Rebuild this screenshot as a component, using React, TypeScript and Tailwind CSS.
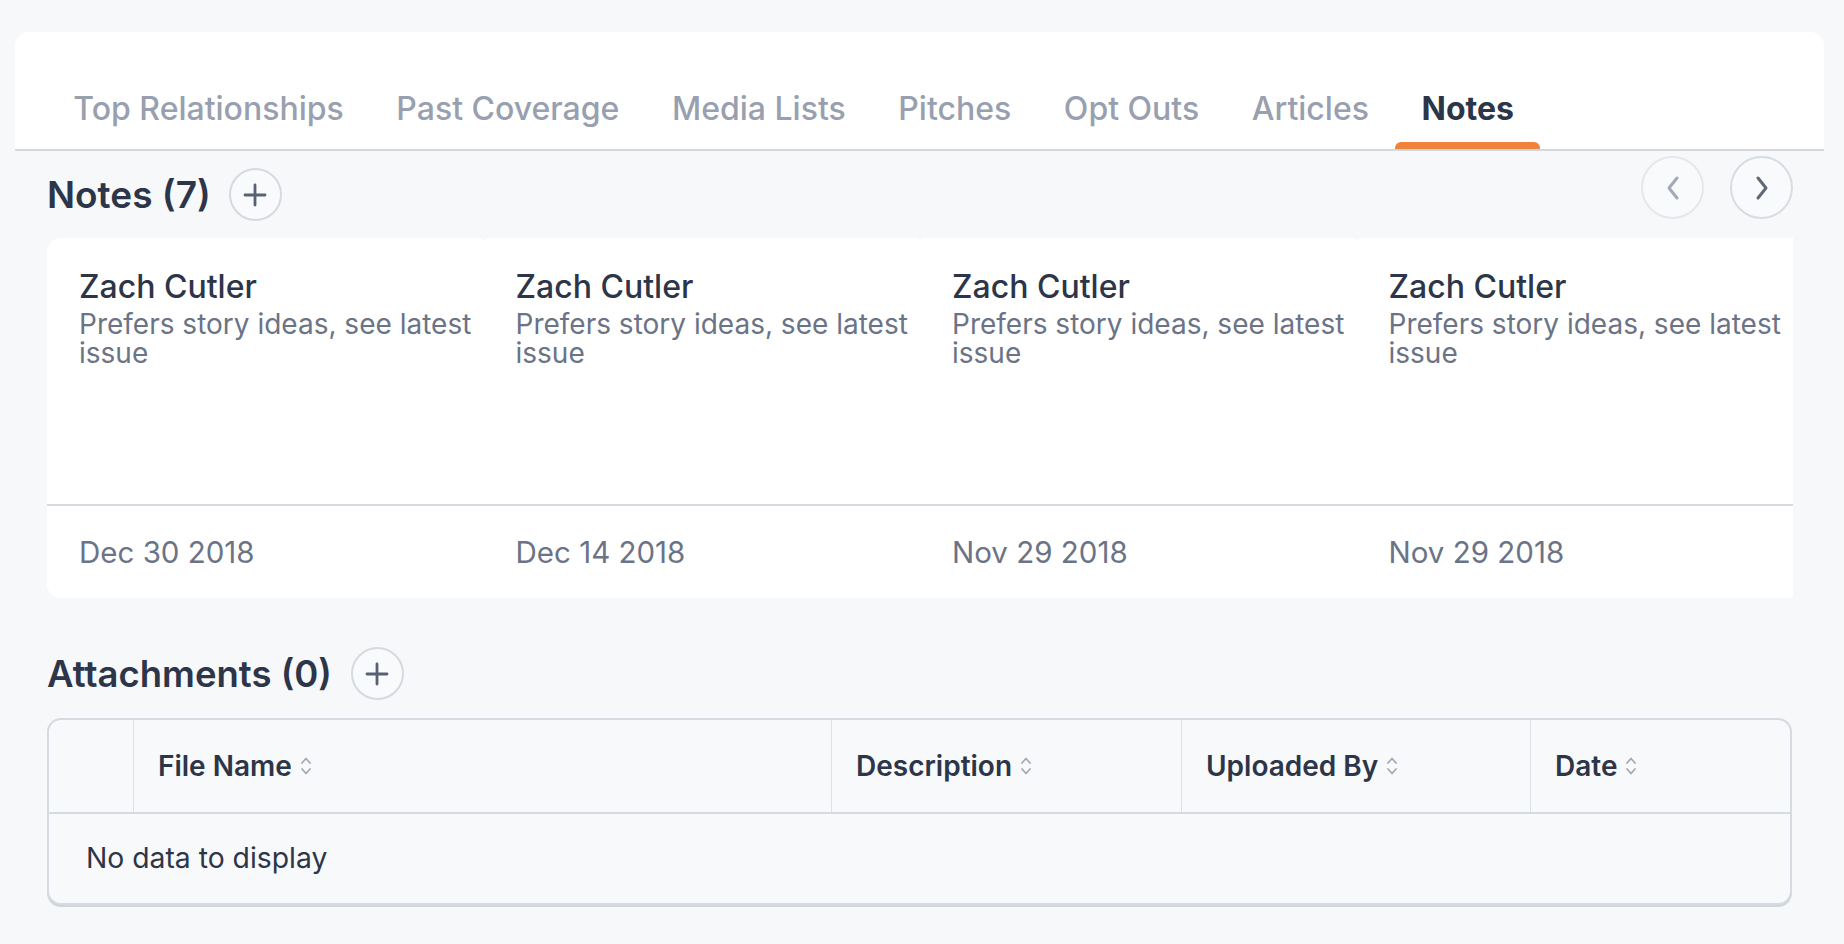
import React from "react";

const tabs = ["Top Relationships", "Past Coverage", "Media Lists", "Pitches", "Opt Outs", "Articles", "Notes"];
const notes = [
  { name: "Zach Cutler", text: "Prefers story ideas, see latest issue", date: "Dec 30 2018" },
  { name: "Zach Cutler", text: "Prefers story ideas, see latest issue", date: "Dec 14 2018" },
  { name: "Zach Cutler", text: "Prefers story ideas, see latest issue", date: "Nov 29 2018" },
  { name: "Zach Cutler", text: "Prefers story ideas, see latest issue", date: "Nov 29 2018" },
];

function PlusButton() {
  return (
    <button className="flex h-[53px] w-[53px] items-center justify-center rounded-full border-2 border-[#d5d9e0] bg-[#f9fafb]">
      <svg width="24" height="24" viewBox="0 0 24 24" fill="none" stroke="#586174" strokeWidth="2.8" strokeLinecap="round">
        <path d="M12 2v20M2 12h20" />
      </svg>
    </button>
  );
}

function SortIcon() {
  return (
    <svg width="12" height="22" viewBox="0 0 12 22" fill="none" stroke="#a3a9b5" strokeWidth="1.8" strokeLinecap="round" strokeLinejoin="round" className="ml-[8px]">
      <path d="M2 8 6 3.5 10 8" />
      <path d="M2 14 6 18.5 10 14" />
    </svg>
  );
}

export default function App() {
  return (
    <div className="h-[944px] w-[1844px] overflow-hidden bg-[#f7f8fa] pl-[15px] pr-[20px] pt-[32px]" style={{ fontFamily: "Inter, 'Noto Sans', sans-serif" }}>
      {/* Tab card */}
      <div className="flex h-[119px] items-end rounded-t-[14px] border-b-2 border-[#d3d7de] bg-white pl-[32px]">
        {tabs.map((t) => {
          const active = t === "Notes";
          return (
            <div key={t} className="flex flex-col items-stretch">
              <div className={`px-[26.3px] text-[32px] leading-[38px] ${active ? "font-bold text-[#2d3548]" : "font-medium text-[#98a0b0]"}`}>{t}</div>
              <div className={`mt-[14px] h-[7px] rounded-t-[6px] ${active ? "bg-[#f0823c]" : "bg-transparent"}`} />
            </div>
          );
        })}
      </div>

      <div className="pl-[32px] pr-[31px]">
        {/* Notes header */}
        <div className="flex items-start justify-between">
          <div className="mt-[17px] flex items-center gap-[18px]">
            <h2 className="text-[37px] font-semibold leading-[42px] text-[#2d3548]">Notes (7)</h2>
            <PlusButton />
          </div>
          <div className="mt-[5px] flex gap-[26px]">
            <button className="flex h-[63px] w-[63px] items-center justify-center rounded-full border-2 border-[#e4e7ec] bg-[#f9fafb]">
              <svg width="16" height="26" viewBox="0 0 16 26" fill="none" stroke="#a3a9b5" strokeWidth="3" strokeLinecap="round" strokeLinejoin="round">
                <path d="M12 3 4 13l8 10" />
              </svg>
            </button>
            <button className="flex h-[63px] w-[63px] items-center justify-center rounded-full border-2 border-[#d8dce3] bg-[#f9fafb]">
              <svg width="16" height="26" viewBox="0 0 16 26" fill="none" stroke="#5f6779" strokeWidth="3" strokeLinecap="round" strokeLinejoin="round">
                <path d="M4 3l8 10-8 10" />
              </svg>
            </button>
          </div>
        </div>

        {/* Note cards */}
        <div className="mt-[17px] flex h-[360px] overflow-hidden rounded-l-[14px]">
          {notes.map((n, i) => (
            <div key={i} className={`flex w-[436.5px] shrink-0 flex-col bg-white ${i > 0 ? "rounded-tl-[4px]" : ""} ${i < notes.length - 1 ? "rounded-tr-[4px]" : ""}`}>
              <div className="h-[266px] pl-[32px] pr-[4px] pt-[31px]">
                <div className="text-[32px] font-medium leading-[36px] text-[#2d3548]">{n.name}</div>
                <div className="mt-[5px] text-[28px] leading-[29px] text-[#6b7386]">{n.text}</div>
              </div>
              <div className="h-[2px] bg-[#d5d9e0]" />
              <div className="flex h-[92px] items-center pl-[32px] text-[29.5px] text-[#6b7386]">{n.date}</div>
            </div>
          ))}
        </div>

        {/* Attachments header */}
        <div className="mt-[49px] flex items-center gap-[19px]">
          <h2 className="text-[36.5px] font-semibold leading-[42px] text-[#2d3548]">Attachments (0)</h2>
          <PlusButton />
        </div>

        {/* Table */}
        <div className="mt-[18px] mr-[1px] overflow-hidden rounded-[14px] border-2 border-[#d6dae1] bg-[#f8f9fb] shadow-[0_2px_0_#d1d5db]">
          <div className="grid h-[94px] grid-cols-[85px_698px_350px_349px_1fr] border-b-2 border-[#d6dae1]">
            <div className="border-r border-[#dde1e7]" />
            {["File Name", "Description", "Uploaded By", "Date"].map((h, i) => (
              <div key={h} className={`flex items-center pl-[24px] ${i < 3 ? "border-r border-[#dde1e7]" : ""}`}>
                <span className="text-[28px] font-semibold text-[#2d3548]">{h}</span>
                <SortIcon />
              </div>
            ))}
          </div>
          <div className="flex h-[89px] items-center pl-[37px] text-[28.3px] text-[#2d3548]">No data to display</div>
        </div>
      </div>
    </div>
  );
}
